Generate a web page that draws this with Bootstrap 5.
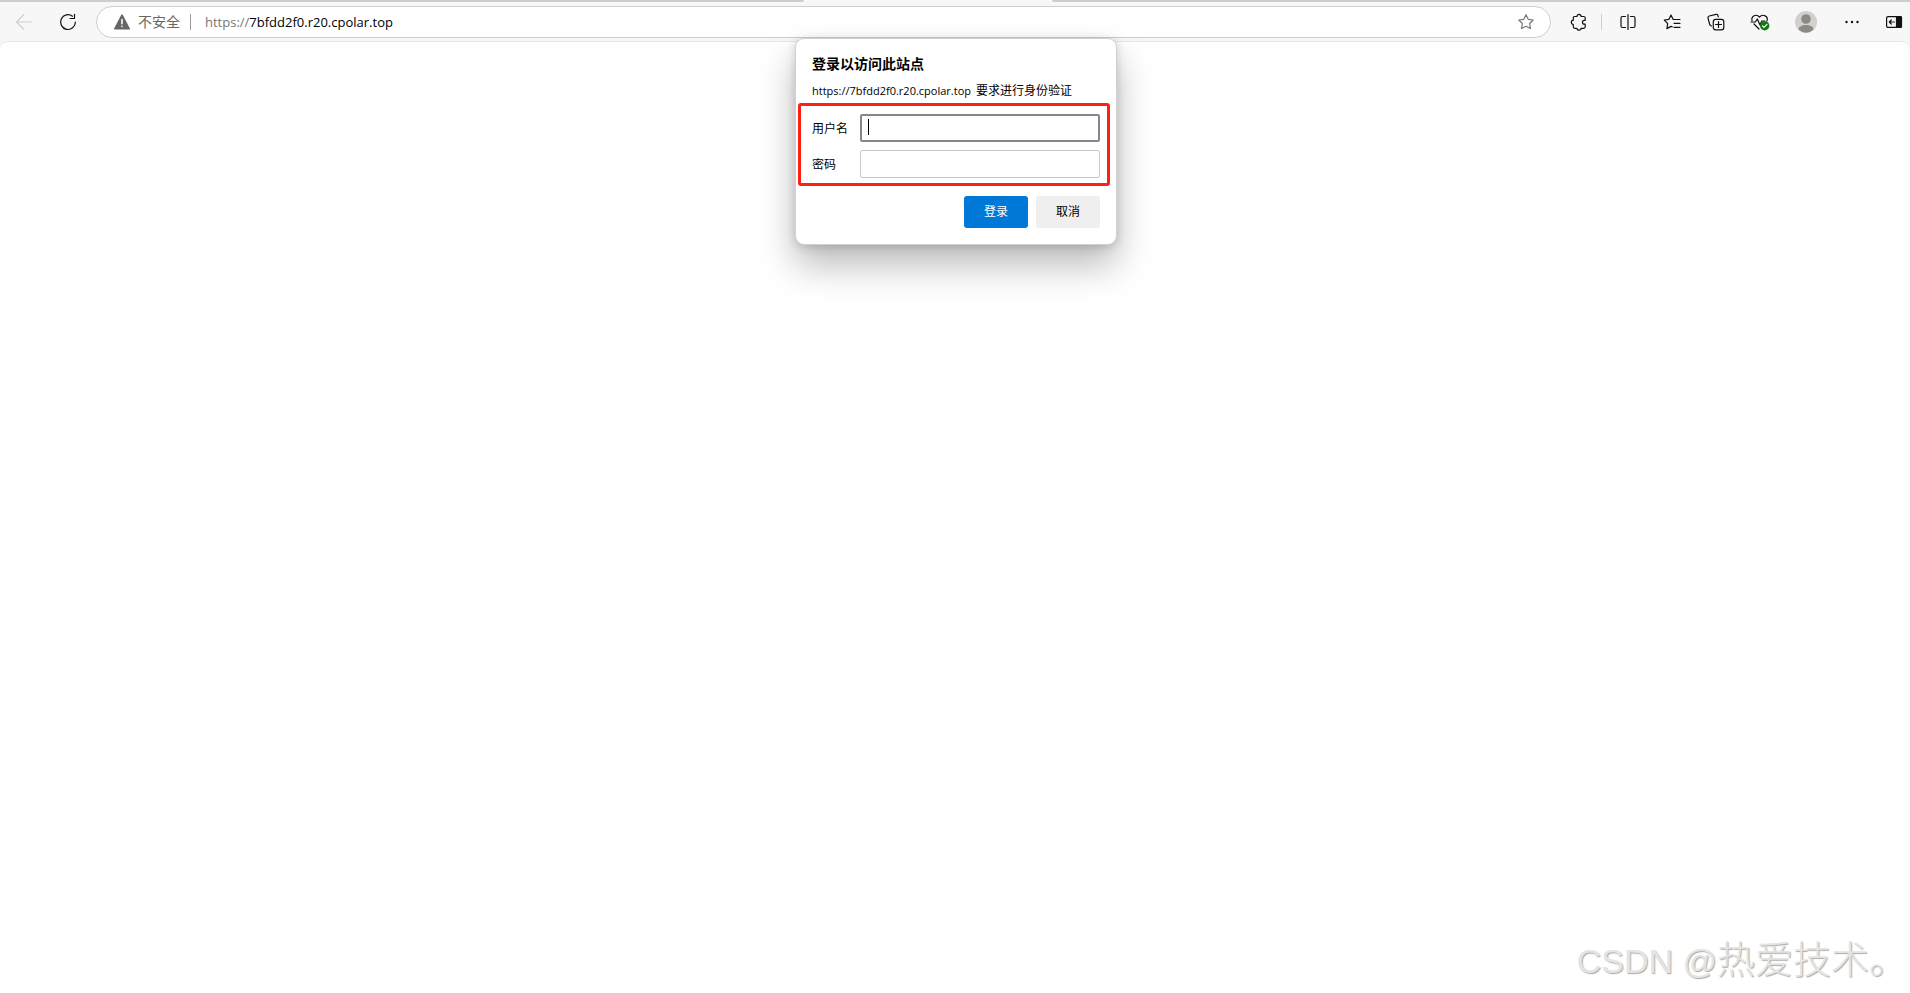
<!DOCTYPE html>
<html lang="zh-CN">
<head>
<meta charset="utf-8">
<meta name="viewport" content="width=device-width, initial-scale=1">
<title>登录以访问此站点</title>
<link href="https://cdn.jsdelivr.net/npm/bootstrap@5.3.0/dist/css/bootstrap.min.css" rel="stylesheet">
<style>
body{font-family:"Open Sans","Noto Sans CJK SC",sans-serif;font-size:12px;line-height:16px;color:#000;background:#f7f7f7}
.tabstrip{height:2px}
.tab-side{background:#cdcdcd}
.tab-side.start{flex:804 1 0;border-bottom-right-radius:2px}
.tab-side.end{flex:858 1 0;border-bottom-left-radius:2px}
.tab-current{flex:248 1 0}
.toolbar{height:40px}
.tool{height:32px;width:36px;color:#111;background:none;border:0;padding:0;display:flex;align-items:center;justify-content:center;flex:none}
.tool.narrow{width:28px}
.tool.wide{width:40px}
.tool.edge{width:32px}
.tool:disabled{color:#cfcfcf}
svg{display:block;fill:none;stroke:currentColor;stroke-width:1.2;stroke-linecap:round;stroke-linejoin:round}
.address{height:32px;border:1px solid #cecece;background:#fff;margin-right:6px;padding-left:17px;padding-right:6px}
.warn{color:#666}
.site-state{font-size:14px;color:#666;background:none;border:0;padding:0}
.rule{width:1px;height:16px;background:#cfcfcf}
.rule.dark{background:#999;margin:0 14px 0 10px}
.url{font-size:13px;line-height:20px;color:#000}
.scheme{color:#777}
.page{border-top:1px solid #e8e8e8;border-radius:8px 8px 0 0;background:#fff;margin-top:-1px}
.login{position:absolute;top:38px;left:50%;width:322px;margin-left:-160px;background:#fff;border:1px solid #d0d0d0;border-radius:9px;box-shadow:0 20px 36px rgba(0,0,0,.27),0 2px 10px rgba(0,0,0,.16);padding-bottom:16px}
.login h1{font-size:14px;line-height:20px;font-weight:700;margin:15px 16px 9px}
.login p{line-height:16px;margin:0 16px 4px}
.origin{font-size:11px;margin-right:2px}
.fields{border:3px solid #ff2015;border-radius:3px;margin:0 6px 0 2px;padding:8px 7px 5px 11px}
.fields label{width:48px;flex:none;padding-top:2px}
.field{height:28px;border:1px solid #c8c8c8;border-radius:2px;padding:0 6px;min-width:0;font-size:12px;outline:0;background:#fff}
.field:focus{border:2px solid #82878e}
.field:focus:placeholder-shown{caret-color:transparent;background:linear-gradient(#000,#000) 6px 3px/1px 16px no-repeat #fff}
.actions{padding:10px 16px 0}
.act{width:64px;height:32px;border:0;border-radius:3px;font-size:12px;padding:0;background:#efefef;color:#000}
.act.main{background:#0078d7;color:#fff}
.watermark{font-family:"Liberation Sans","Noto Sans CJK SC",sans-serif;font-size:34px;line-height:48px;font-weight:300;color:#e4e4e4;text-shadow:1px 1px 1px #aaa;margin:0 3px 8px 0}
.watermark span{font-size:38px}
</style>
</head>
<body class="d-flex flex-column min-vh-100">
<header>
  <div class="tabstrip d-flex"><div class="tab-side start"></div><div class="tab-current"></div><div class="tab-side end"></div></div>
  <nav class="toolbar d-flex align-items-center gap-2" aria-label="浏览器工具栏">
    <button class="tool wide ms-1" disabled aria-label="后退"><svg width="18" height="18" viewBox="0 0 18 18"><path d="M17 9H1.500M8.500 2 1.500 9l7 7"/></svg></button>
    <button class="tool edge" aria-label="刷新"><svg width="18" height="18" viewBox="0 0 18 18"><path d="M13.500 3.200A7.400 7.400 0 1 0 16.400 9M15.500 1.300v4.200h-4.400"/></svg></button>
    <div class="address rounded-pill d-flex align-items-center flex-grow-1 ms-1">
      <svg class="warn" width="16" height="16" viewBox="0 0 16 16"><path d="M8 1.200 15.200 14.800H.800z" fill="currentColor" stroke-width="1.600"/><path d="M8 5.500v4.200M8 12.200v.200" stroke="#fff" stroke-width="1.600"/></svg>
      <button class="site-state ms-2">不安全</button>
      <span class="rule dark"></span>
      <a class="url flex-grow-1 text-decoration-none" href="#"><span class="scheme">https://</span>7bfdd2f0.r20.cpolar.top</a>
      <button class="tool" aria-label="收藏"><svg width="18" height="18" viewBox="0 0 18 18"><path stroke="#777" d="m9 1.700 2.200 4.600 5 .700-3.600 3.500.9 5L9 13.200l-4.500 2.300.9-5L1.800 7l5-.700z"/></svg></button>
    </div>
    <button class="tool narrow" aria-label="扩展"><svg width="18" height="18" viewBox="0 0 18 18"><path d="M4.500 3.500h2.400C6.900.700 11.100.700 11.100 3.500h2.600q1.500 0 1.500 1.500v2.300h-.8c-2.600 0-2.600 3.900 0 3.900h.8v2.600q0 1.500-1.500 1.500h-2.600c0 2.500-4.200 2.500-4.200 0H4.700q-1.400 0-1.400-1.500v-2.400C.700 11.400.700 7.200 3.300 7.200V4.800q0-1.300 1.200-1.300z"/></svg></button>
    <span class="rule"></span>
    <button class="tool" aria-label="拆分屏幕"><svg width="18" height="18" viewBox="0 0 18 18"><path d="M6.500 3.500H3.500Q2 3.500 2 5v8q0 1.500 1.500 1.500h3M11.500 3.500h3Q16 3.500 16 5v8q0 1.500-1.500 1.500h-3M9 1.500v15"/></svg></button>
    <button class="tool" aria-label="收藏夹"><svg width="18" height="18" viewBox="0 0 18 18"><path d="M10.500 6.300H10L8 2 6 6.300 1.300 7l3.400 3.600-.8 5 4.100-2.200 1.300.400M11 6.500h6M11 10.300h6M11 14.300h6"/></svg></button>
    <button class="tool" aria-label="集锦"><svg width="18" height="18" viewBox="0 0 18 18"><path d="M4.300 13 2.800 11.800 1 5q-.3-1.600 1.200-2L9 1.300q1.400-.3 1.900 1l.4 1.500"/><rect x="6.300" y="6.300" width="10.500" height="10.500" rx="2.400" fill="#f7f7f7"/><path d="M11.500 8.500v6M8.500 11.500h6"/></svg></button>
    <button class="tool" aria-label="浏览器基本信息"><svg width="20" height="18" viewBox="0 0 20 18"><path d="M2 7.700C1 3.500 6 .200 9.500 4 13 .200 18.500 3.500 17 7.800M1 9h4.300l2-3 2.700 6 1.800-4h3M4 11l5 5"/><circle cx="14.700" cy="12.700" r="4.700" fill="#107c10" stroke="none"/><path d="m12.500 12.800 1.500 1.500 3-3" stroke="#fff"/></svg></button>
    <button class="tool wide" aria-label="个人资料"><svg width="22" height="22" viewBox="0 0 22 22"><g stroke="none"><circle cx="11" cy="11" r="11" fill="#d2d0ce"/><circle cx="11" cy="8" r="4.800" fill="#8d8985"/><path d="M3.500 18.500c0-6 15-6 15 0Q11 25 3.500 18.500z" fill="#8d8985"/></g></svg></button>
    <button class="tool" aria-label="设置及其他"><svg width="18" height="18" viewBox="0 0 18 18"><g fill="currentColor" stroke="none"><circle cx="3.500" cy="9" r="1.200"/><circle cx="9" cy="9" r="1.200"/><circle cx="14.500" cy="9" r="1.200"/></g></svg></button>
    <button class="tool edge" aria-label="侧栏"><svg width="18" height="18" viewBox="0 0 18 18"><rect x="1.600" y="3.600" width="14.800" height="10.800" rx="1.500"/><path d="M11.500 3.500h4q1 0 1 1v9q0 1-1 1h-4z" fill="currentColor"/><path d="M4.300 9h5M6.300 7l-2 2 2 2"/></svg></button>
  </nav>
</header>
<main class="page flex-grow-1 d-flex flex-column">
  <form class="login" onsubmit="return false">
    <h1>登录以访问此站点</h1>
    <p><span class="origin">https://7bfdd2f0.r20.cpolar.top</span> 要求进行身份验证</p>
    <div class="fields d-flex flex-column gap-2">
      <div class="d-flex align-items-center"><label for="user">用户名</label><input class="field flex-grow-1" id="user" type="text" placeholder=" " autofocus></div>
      <div class="d-flex align-items-center"><label for="pass">密码</label><input class="field flex-grow-1" id="pass" type="password"></div>
    </div>
    <div class="actions d-flex justify-content-end gap-2"><button class="act main" type="submit">登录</button><button class="act" type="button">取消</button></div>
  </form>
  <div class="watermark mt-auto align-self-end">CSDN @<span>热爱技术。</span></div>
</main>
<script src="https://cdn.jsdelivr.net/npm/bootstrap@5.3.0/dist/js/bootstrap.bundle.min.js"></script>
</body>
</html>
